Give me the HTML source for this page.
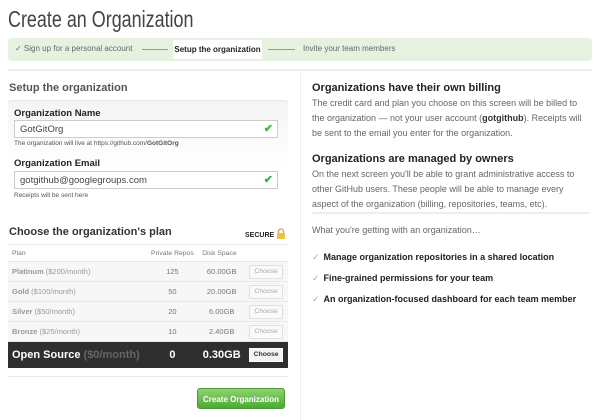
<!DOCTYPE html>
<html><head><meta charset="utf-8"><style>
*{margin:0;padding:0;box-sizing:border-box}
body{width:600px;height:420px;background:#fff;font-family:"Liberation Sans",Arial,sans-serif;color:#333;position:relative;overflow:hidden}
.a{position:absolute;white-space:nowrap}
h1{position:absolute;left:8px;top:6px;font-size:23px;font-weight:normal;color:#444;white-space:nowrap;transform:scaleX(0.78);transform-origin:left}
.bar{position:absolute;left:8px;top:38px;width:584px;height:23px;background:#e6f2df;border-radius:3px;font-size:8px;color:#666}
.cur{position:absolute;left:165px;top:2px;width:89px;height:19px;background:#fff;color:#222;font-weight:bold;font-size:8px;line-height:19px;text-align:center;white-space:nowrap}
.arrow{position:absolute;top:11px;height:1px;background:#999}
.h2{font-size:11px;font-weight:bold;color:#222}
.p{font-size:9px;color:#666;line-height:15px}
.box{position:absolute;left:8px;top:100px;width:280px;height:110px;background:linear-gradient(#f4f4f4,#fff 60%);border-radius:3px;border-top:1px solid #e8e8e8}
.inp{position:absolute;left:14px;width:264px;height:18px;border:1px solid #ccc;background:#fff;font-size:9.5px;color:#444;padding:3px 5px}
.inp b{position:absolute;right:4px;top:1px;color:#3bb43b;font-size:11px}
.lbl{font-size:9.5px;font-weight:bold;color:#222}
.note{font-size:6.5px;color:#555}
table{position:absolute;left:8px;top:244px;width:280px;border-collapse:collapse;font-size:7.5px;color:#999}
td{padding:0 4px;border-top:1px solid #e8e8e8;background:#f7f7f7}
tr.h td{background:#fff;height:17px;color:#777;font-size:6.8px}
tr.r td{height:20px}
td.n{text-align:center;color:#777}
td b{color:#999}
.ch{display:inline-block;width:34px;height:14px;border:1px solid #e0e0e0;background:#fafafa;font-size:6.8px;color:#aaa;line-height:12px;text-align:center}
tr.os td{background:#2f2f2f;height:26px;color:#fff;font-size:11px;font-weight:bold}
tr.os .ch{background:#f3f3f3;color:#333;font-weight:bold;border-color:#fff}
.btn{position:absolute;left:197px;top:388px;width:88px;height:21px;border-radius:3px;background:linear-gradient(#8fd36f,#4ba934);color:#fff;font-size:8px;font-weight:bold;text-align:center;line-height:21px;border:1px solid #4a9a35}
.li{font-size:9px;font-weight:bold;color:#222}
.li i{font-style:normal;color:#aaa;font-weight:normal;margin-right:4px}
</style></head><body>
<h1>Create an Organization</h1>
<div class="bar">
<span class="a" style="left:7px;top:6px">✓ Sign up for a personal account</span>
<div class="arrow" style="left:134px;width:26px"></div>
<div class="cur">Setup the organization</div>
<div class="arrow" style="left:260px;width:27px"></div>
<span class="a" style="left:295px;top:6px">Invite your team members</span>
</div>
<div class="a" style="left:8px;top:69px;width:584px;height:2px;background:#eee"></div>
<div class="a" style="left:300px;top:71px;width:1px;height:349px;background:#eee"></div>

<div class="a" style="left:9px;top:82px;font-size:11px;font-weight:bold;color:#555">Setup the organization</div>
<div class="box"></div>
<div class="a lbl" style="left:14px;top:108px">Organization Name</div>
<div class="inp" style="top:120px">GotGitOrg<b>✔</b></div>
<div class="a note" style="left:14px;top:140px">The organization will live at https://github.com/<b>GotGitOrg</b></div>
<div class="a lbl" style="left:14px;top:158px">Organization Email</div>
<div class="inp" style="top:171px">gotgithub@googlegroups.com<b>✔</b></div>
<div class="a note" style="left:14px;top:192px">Receipts will be sent here</div>

<div class="a" style="left:9px;top:226px;font-size:11px;font-weight:bold;color:#333">Choose the organization's plan</div>
<div class="a" style="left:245px;top:228px;font-size:7px;font-weight:bold;color:#222">SECURE
<svg width="10" height="11" viewBox="0 0 10 11" style="vertical-align:-2px"><path d="M2.5 5V3.5a2.5 2.5 0 0 1 5 0V5" fill="none" stroke="#c9a640" stroke-width="1.3"/><rect x="1" y="5" width="8" height="6" rx="1" fill="#f0c040"/></svg></div>
<table>
<tr class="h"><td>Plan</td><td class="n">Private Repos</td><td class="n" style="text-align:left">Disk Space</td><td></td></tr>
<tr class="r"><td><b>Platinum</b> ($200/month)</td><td class="n">125</td><td class="n">60.00GB</td><td><span class="ch">Choose</span></td></tr>
<tr class="r"><td><b>Gold</b> ($100/month)</td><td class="n">50</td><td class="n">20.00GB</td><td><span class="ch">Choose</span></td></tr>
<tr class="r"><td><b>Silver</b> ($50/month)</td><td class="n">20</td><td class="n">6.00GB</td><td><span class="ch">Choose</span></td></tr>
<tr class="r"><td><b>Bronze</b> ($25/month)</td><td class="n">10</td><td class="n">2.40GB</td><td><span class="ch">Choose</span></td></tr>
<tr class="os"><td>Open Source <span style="color:#666">($0/month)</span></td><td class="n" style="color:#fff">0</td><td class="n" style="color:#fff">0.30GB</td><td><span class="ch">Choose</span></td></tr>
</table>
<div class="a" style="left:8px;top:376px;width:280px;height:1px;background:#e8e8e8"></div>
<div class="btn">Create Organization</div>

<div class="a h2" style="left:312px;top:82px">Organizations have their own billing</div>
<div class="a p" style="left:312px;top:96px">The credit card and plan you choose on this screen will be billed to<br>the organization — not your user account (<b style="color:#333">gotgithub</b>). Receipts will<br>be sent to the email you enter for the organization.</div>
<div class="a h2" style="left:312px;top:153px">Organizations are managed by owners</div>
<div class="a p" style="left:312px;top:167px">On the next screen you'll be able to grant administrative access to<br>other GitHub users. These people will be able to manage every<br>aspect of the organization (billing, repositories, teams, etc).</div>
<div class="a" style="left:312px;top:212px;width:278px;height:2px;background:#eee"></div>
<div class="a p" style="left:312px;top:223px">What you're getting with an organization…</div>
<div class="a li" style="left:312px;top:252px"><i>✓</i>Manage organization repositories in a shared location</div>
<div class="a li" style="left:312px;top:273px"><i>✓</i>Fine-grained permissions for your team</div>
<div class="a li" style="left:312px;top:294px"><i>✓</i>An organization-focused dashboard for each team member</div>
</body></html>
